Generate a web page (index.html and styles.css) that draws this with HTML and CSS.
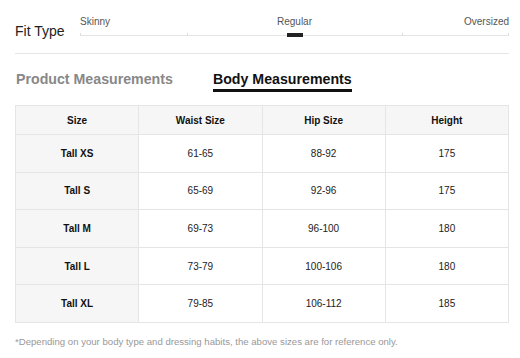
FILE: index.html
```html
<!DOCTYPE html>
<html lang="en">
<head>
    <meta charset="UTF-8">
    <meta name="viewport" content="width=device-width, initial-scale=1.0">
    <title>Size Guide</title>
    <link rel="stylesheet" href="styles.css">
</head>
<body>
    <div class="guide">
        <!-- Fit type slider -->
        <div class="fit">
            <div class="fit-label">Fit Type</div>
            <div class="fit-scale">
                <div class="scale-labels">
                    <span class="lbl-left">Skinny</span>
                    <span class="lbl-mid">Regular</span>
                    <span class="lbl-right">Oversized</span>
                </div>
                <div class="track">
                    <span class="tick tick-0"></span>
                    <span class="tick tick-25"></span>
                    <span class="tick tick-75"></span>
                    <span class="tick tick-100"></span>
                    <span class="thumb"></span>
                </div>
            </div>
        </div>

        <!-- Tabs -->
        <div class="tabs">
            <div class="tab">Product Measurements</div>
            <div class="tab active">Body Measurements</div>
        </div>

        <table class="sizes">
            <thead>
                <tr>
                    <th>Size</th>
                    <th>Waist Size</th>
                    <th>Hip Size</th>
                    <th>Height</th>
                </tr>
            </thead>
            <tbody>
                <tr><th>Tall XS</th><td>61-65</td><td>88-92</td><td>175</td></tr>
                <tr><th>Tall S</th><td>65-69</td><td>92-96</td><td>175</td></tr>
                <tr><th>Tall M</th><td>69-73</td><td>96-100</td><td>180</td></tr>
                <tr><th>Tall L</th><td>73-79</td><td>100-106</td><td>180</td></tr>
                <tr><th>Tall XL</th><td>79-85</td><td>106-112</td><td>185</td></tr>
            </tbody>
        </table>

        <p class="note">*Depending on your body type and dressing habits, the above sizes are for reference only.</p>
    </div>
</body>
</html>
```

FILE: styles.css
```css
body {
    margin: 0;
    font-family: "Liberation Sans", Arial, sans-serif;
    color: #222;
    background: #fff;
}

.guide {
    width: 494px;
    margin-left: 15px;
}

/* fit type */
.fit {
    display: flex;
    padding-top: 16px;
    height: 37px;
    border-bottom: 1px solid #e5e5e5;
}

.fit-label {
    width: 65px;
    margin-top: 7px;
    font-size: 14px;
    line-height: 16px;
    color: #222;
}

.fit-scale {
    flex: 1;
}

.scale-labels {
    display: grid;
    grid-template-columns: 1fr auto 1fr;
    font-size: 10px;
    line-height: 12px;
    color: #555;
}

.lbl-left { text-align: left; }
.lbl-right { text-align: right; }

.track {
    position: relative;
    height: 1px;
    margin-top: 7px;
    background: #e5e5e5;
}

.tick {
    position: absolute;
    bottom: 0;
    width: 1px;
    height: 3px;
    background: #ddd;
}

.tick-0 { left: 0; }
.tick-25 { left: 25%; }
.tick-75 { left: 75%; }
.tick-100 { right: 0; }

.thumb {
    position: absolute;
    left: 50%;
    top: -2px;
    width: 16px;
    height: 4px;
    margin-left: -8px;
    background: #222;
}

/* tabs */
.tabs {
    display: flex;
    gap: 40px;
    padding-top: 17px;
    margin-left: 1px;
}

.tab {
    font-size: 14.2px;
    line-height: 16px;
    font-weight: bold;
    color: #888;
    padding-bottom: 2px;
    border-bottom: 3px solid transparent;
}

.tab.active {
    color: #111;
    border-bottom-color: #111;
}

/* table */
.sizes {
    width: 100%;
    margin-top: 13px;
    border-collapse: collapse;
    table-layout: fixed;
    font-size: 10px;
}

.sizes th,
.sizes td {
    border: 1px solid #e5e5e5;
    text-align: center;
    padding: 0;
}

.sizes thead th {
    height: 28px;
    background: #f6f6f6;
}

.sizes tbody th,
.sizes tbody td {
    height: 36.6px;
}

.sizes th {
    font-weight: bold;
    color: #111;
}

.sizes tbody th {
    background: #f6f6f6;
}

.sizes td {
    color: #222;
}

.note {
    margin: 13px 0 0;
    padding: 0 0 10px;
    font-size: 9.6px;
    line-height: 12px;
    color: #999;
    border-bottom: 1px solid #e5e5e5;
}
```
